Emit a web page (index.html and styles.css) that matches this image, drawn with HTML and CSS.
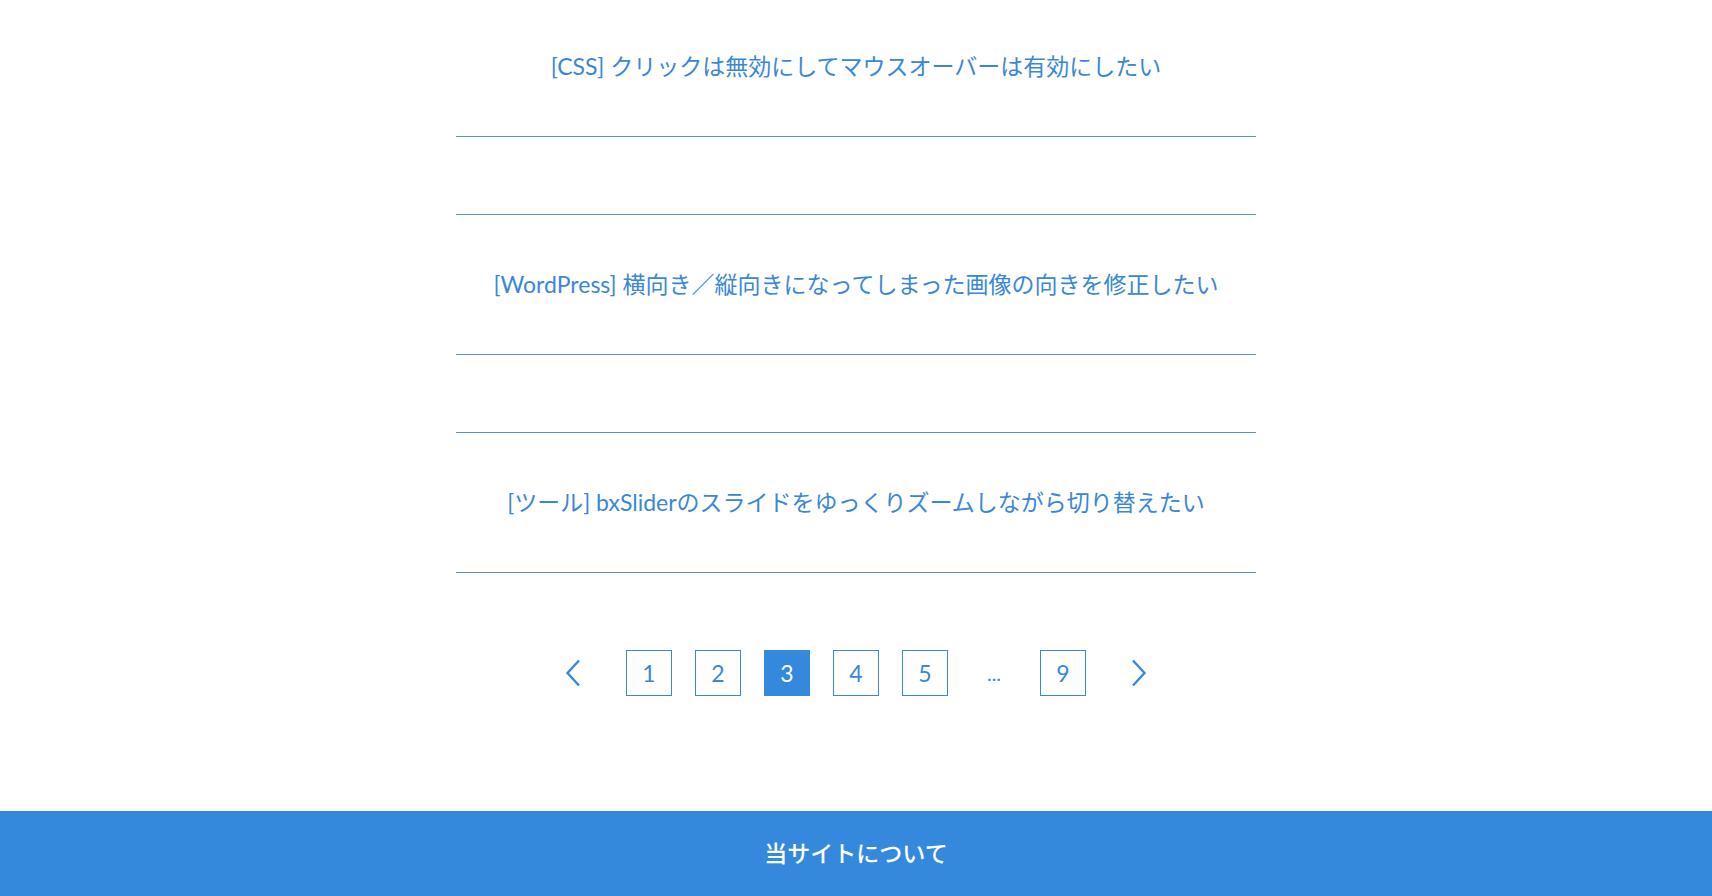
FILE: index.html
```html
<!DOCTYPE html>
<html>
	<head>
		<meta charset="utf-8">
		<title>記事一覧</title>
		<link rel="stylesheet" href="styles.css">
	</head>
	<body>
		<!-- 記事リスト -->
		<div class="main">
			<ul class="post-list">
				<li class="post-item"><a class="post-link" href="#">[CSS] クリックは無効にしてマウスオーバーは有効にしたい</a></li>
				<li class="post-item empty"></li>
				<li class="post-item"><a class="post-link" href="#">[WordPress] 横向き／縦向きになってしまった画像の向きを修正したい</a></li>
				<li class="post-item empty"></li>
				<li class="post-item"><a class="post-link" href="#">[ツール] bxSliderのスライドをゆっくりズームしながら切り替えたい</a></li>
			</ul>

			<!-- ページ送り -->
			<div class="pager">
				<a class="pager-arrow prev" href="#">
					<svg width="16" height="28" viewBox="0 0 16 28"><path d="M14 1.5 L2.5 14 L14 26.5" fill="none" stroke="#3a87d8" stroke-width="2.4"/></svg>
				</a>
				<a class="page" href="#">1</a>
				<a class="page" href="#">2</a>
				<span class="page current">3</span>
				<a class="page" href="#">4</a>
				<a class="page" href="#">5</a>
				<span class="page dots">...</span>
				<a class="page" href="#">9</a>
				<a class="pager-arrow next" href="#">
					<svg width="16" height="28" viewBox="0 0 16 28"><path d="M2 1.5 L13.5 14 L2 26.5" fill="none" stroke="#3a87d8" stroke-width="2.4"/></svg>
				</a>
			</div>
		</div>

		<!-- フッター -->
		<div class="footer">
			<a class="footer-link" href="#">当サイトについて</a>
		</div>
	</body>
</html>
```

FILE: styles.css
```css
* {
	margin: 0;
	padding: 0;
	list-style: none;
	box-sizing: border-box;
}

body {
	font-family: Lato, "Noto Sans CJK JP", sans-serif;
	background-color: #fff;
	color: #3a87d8;
}

a {
	color: #3a87d8;
	text-decoration: none;
}

.main {
	width: 800px;
	margin: 0 auto;
}

.post-list {
	margin-top: -3px;
}

.post-item {
	padding: 54px 0;
	border-bottom: 1px solid #5a8ecf;
	text-align: center;
	font-size: 23px;
	line-height: 31px;
}

.post-item.empty {
	padding: 0;
	height: 78px;
}

.pager {
	display: flex;
	justify-content: center;
	align-items: center;
	gap: 23px;
	margin-top: 77px;
	height: 46px;
}

.page {
	width: 46px;
	height: 46px;
	display: flex;
	justify-content: center;
	align-items: center;
	border: 1px solid #3a87d8;
	font-size: 23px;
	color: #3a87d8;
}

.page.current {
	background-color: #3589dc;
	border-color: #3589dc;
	color: #fff;
}

.page.dots {
	border: none;
	font-size: 20px;
}

.pager-arrow {
	width: 46px;
	height: 46px;
	display: flex;
	justify-content: center;
	align-items: center;
}

.prev {
	margin-right: 7px;
}

.next {
	margin-left: 7px;
}

.footer {
	margin-top: 115px;
	padding: 26px 0 40px;
	background-color: #3589dc;
	text-align: center;
}

.footer-link {
	color: #fff;
	font-size: 23px;
	font-weight: 500;
	line-height: 32px;
}
```
